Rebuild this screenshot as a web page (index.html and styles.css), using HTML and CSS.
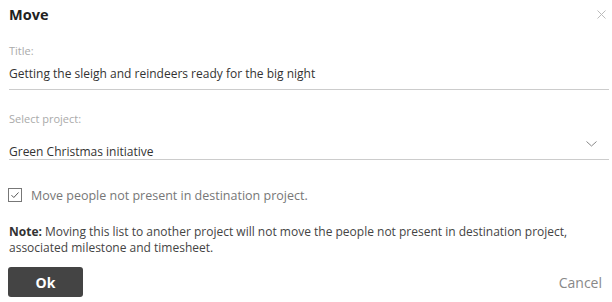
FILE: index.html
```html
<!DOCTYPE html>
<html>
<head>
<meta charset="utf-8">
<link rel="stylesheet" href="styles.css">
</head>
<body>
<div class="dialog">
  <div class="header">
    <h1 class="title">Move</h1>
    <span class="close" aria-label="Close">
      <svg width="9" height="9" viewBox="0 0 9 9"><path d="M0.5 0.5L8.5 8.5M8.5 0.5L0.5 8.5" stroke="#bbb" stroke-width="1" fill="none"/></svg>
    </span>
  </div>
  <div class="field">
    <label class="label">Title:</label>
    <div class="input">Getting the sleigh and reindeers ready for the big night</div>
  </div>
  <div class="field select-field">
    <label class="label">Select project:</label>
    <div class="select">
      <span>Green Christmas initiative</span>
      <svg class="chevron" width="11" height="6" viewBox="0 0 11 6"><path d="M0.5 0.5L5.5 5L10.5 0.5" stroke="#888" stroke-width="1" fill="none"/></svg>
    </div>
  </div>
  <div class="check-row">
    <span class="checkbox">
      <svg width="14" height="14" viewBox="0 0 14 14"><rect x="0.5" y="0.5" width="13" height="13" fill="#fff" stroke="#777"/><path d="M3.5 7.2L5.8 9.5L10.5 4.5" stroke="#555" stroke-width="1" fill="none"/></svg>
    </span>
    <span class="check-label">Move people not present in destination project.</span>
  </div>
  <p class="note"><b>Note: </b>Moving this list to another project will not move the people not present in destination project, associated milestone and timesheet.</p>
  <div class="actions">
    <button class="ok">Ok</button>
    <button class="cancel">Cancel</button>
  </div>
</div>
</body>
</html>
```

FILE: styles.css
```css
html, body {
  margin: 0;
  padding: 0;
  background: #fff;
}
body {
  font-family: "Open Sans", "Noto Sans", sans-serif;
  color: #333;
}
.dialog {
  width: 600px;
  padding: 0 3px 0 9px;
}
.header {
  display: flex;
  justify-content: space-between;
  align-items: flex-start;
  height: 42px;
}
.title {
  margin: 4px 0 0 0;
  font-size: 14.5px;
  font-weight: 700;
  color: #222;
  line-height: 22px;
}
.close {
  display: block;
  margin: 10px 3px 0 0;
  line-height: 0;
}
.field {
  display: flex;
  flex-direction: column;
}
.label {
  font-size: 11px;
  color: #aaa;
  line-height: 16px;
  margin-top: 1px;
}
.input {
  font-size: 12px;
  line-height: 18px;
  margin-top: 6px;
  padding-bottom: 6px;
  border-bottom: 1px solid #ccc;
  color: #333;
}
.select-field .label {
  margin-top: 21px;
}
.select {
  display: flex;
  justify-content: space-between;
  align-items: flex-start;
  font-size: 12px;
  line-height: 14px;
  margin-top: 18px;
  border-bottom: 1px solid #ccc;
  color: #333;
}
.chevron {
  margin: -4px 12px 0 0;
}
.check-row {
  display: flex;
  align-items: flex-start;
  margin-top: 28px;
  gap: 9px;
}
.checkbox {
  line-height: 0;
  margin-left: -1px;
}
.check-label {
  font-size: 12.5px;
  color: #777;
  line-height: 16px;
}
.note {
  margin: 20px 0 0 0;
  font-size: 12px;
  line-height: 16px;
  color: #444;
}
.note b {
  color: #333;
}
.actions {
  display: flex;
  justify-content: space-between;
  align-items: center;
  margin-top: 11px;
}
.ok {
  width: 75px;
  height: 30px;
  margin-left: -1px;
  border: 0;
  border-radius: 3px;
  background: #444;
  color: #fff;
  font-family: inherit;
  font-size: 14px;
  font-weight: 700;
}
.cancel {
  border: 0;
  background: none;
  padding: 0;
  margin-right: 7px;
  font-family: inherit;
  font-size: 14px;
  color: #888;
}
```
